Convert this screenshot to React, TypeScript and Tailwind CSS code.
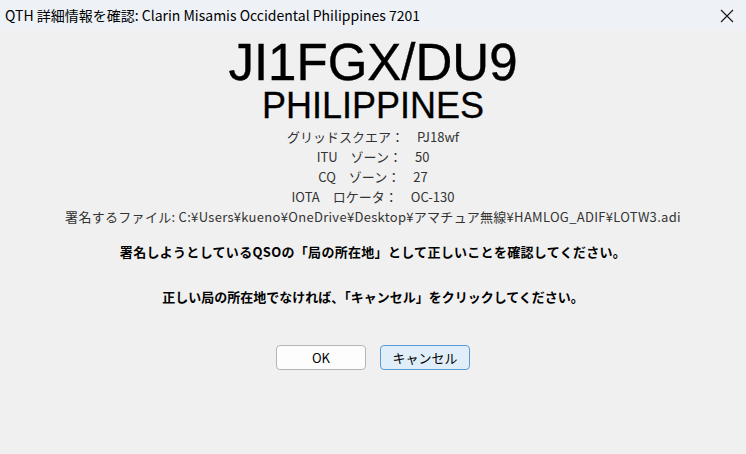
import React from "react";

const ui = { fontFamily: '"Noto Sans CJK JP", "Noto Sans", sans-serif' };
const arial = { fontFamily: '"Liberation Sans", Arial, sans-serif' };

export default function App() {
  const info = [
    "グリッドスクエア：　PJ18wf",
    "ITU　ゾーン：　50",
    "CQ　ゾーン：　27",
    "IOTA　ロケータ：　OC-130",
  ];
  return (
    <div className="w-[746px] h-[454px] bg-[#f0f0f0] flex flex-col overflow-hidden" style={ui}>
      <div className="h-[30px] bg-[#eef2f7] flex items-center justify-between pl-[5px] pr-[12px] shrink-0">
        <span className="text-[14px] text-black leading-none">
          QTH 詳細情報を確認: Clarin Misamis Occidental Philippines 7201
        </span>
        <svg width="14" height="14" viewBox="0 0 14 14" className="mt-[1px]">
          <path d="M1 1 L13 13 M13 1 L1 13" stroke="#1a1a1a" strokeWidth="1.2" fill="none" />
        </svg>
      </div>
      <div className="flex flex-col items-center">
        <div className="mt-[7px] text-[51px] leading-[51px] text-black [-webkit-text-stroke:0.4px_black]" style={arial}>
          JI1FGX/DU9
        </div>
        <div className="text-[36px] leading-[36px] text-black [-webkit-text-stroke:0.3px_black]" style={arial}>
          PHILIPPINES
        </div>
        <div className="mt-[3px] flex flex-col items-center text-[13px] leading-[20px] text-[#333]">
          {info.map((t) => (
            <div key={t} className="whitespace-pre">{t}</div>
          ))}
          <div className="tracking-[0.3px]">署名するファイル: C:¥Users¥kueno¥OneDrive¥Desktop¥アマチュア無線¥HAMLOG_ADIF¥LOTW3.adi</div>
        </div>
        <div className="mt-[15px] text-[13px] leading-[20px] font-bold text-black tracking-[0.3px]">
          署名しようとしているQSOの「局の所在地」として正しいことを確認してください。
        </div>
        <div className="mt-[25px] text-[13px] leading-[20px] font-bold text-black">
          正しい局の所在地でなければ、「キャンセル」をクリックしてください。
        </div>
        <div className="mt-[38px] flex gap-[14px]">
          <button className="w-[90px] h-[25px] bg-[#fdfdfd] border border-[#b5b5b5] rounded-[4px] text-[13px] text-black flex items-center justify-center">
            OK
          </button>
          <button className="w-[90px] h-[25px] bg-[#e0eef9] border border-[#5b9bd5] rounded-[4px] text-[13px] text-black flex items-center justify-center">
            キャンセル
          </button>
        </div>
      </div>
    </div>
  );
}
